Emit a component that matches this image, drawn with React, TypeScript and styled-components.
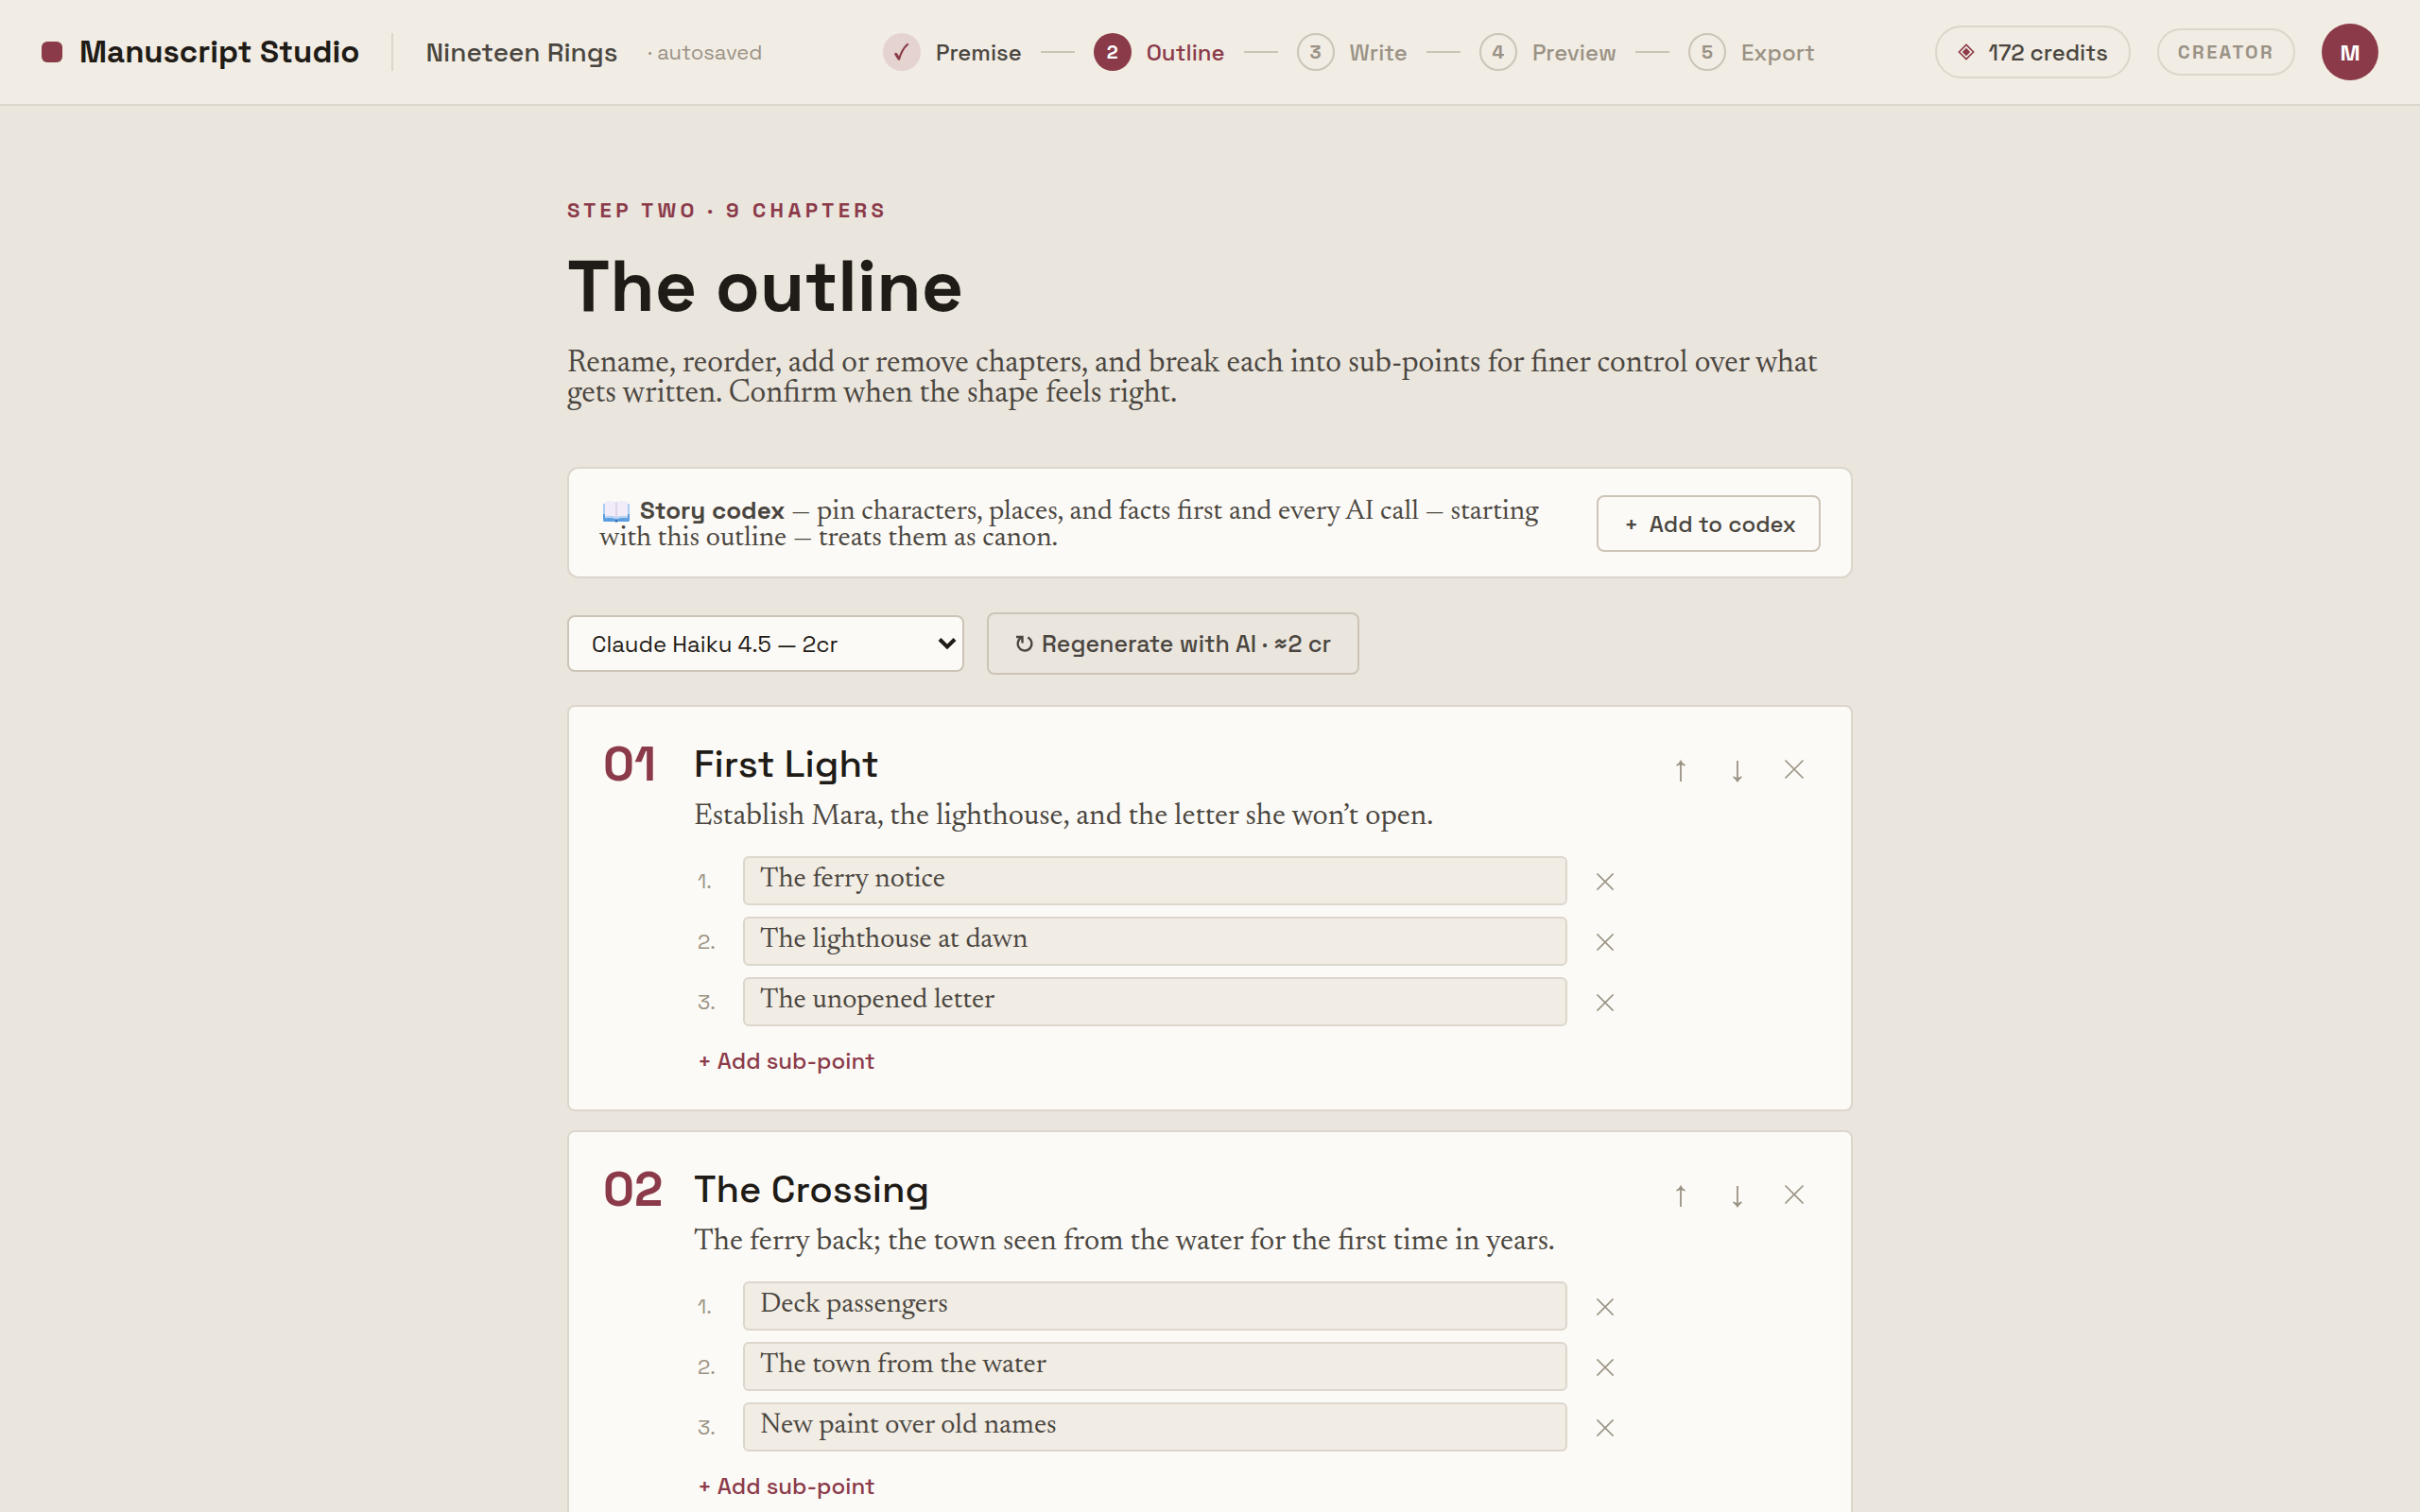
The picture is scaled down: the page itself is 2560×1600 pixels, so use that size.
import React, { Fragment, useState } from "react";
import styled, { createGlobalStyle } from "styled-components";

const color = {
  page: "#eae5dd",
  bar: "#f1ece4",
  card: "#fcfaf6",
  field: "#f1ece4",
  line: "#dcd6cc",
  lineStrong: "#cdc4b8",
  ink: "#1f1b16",
  text: "#4a463f",
  muted: "#9a9284",
  accent: "#8b3a4a",
  accentSoft: "#e5d3d0",
};

const sans = `"Space Grotesk", Inter, "Liberation Sans", sans-serif`;
const serif = `Newsreader, "Liberation Serif", serif`;

const GlobalStyle = createGlobalStyle`
  *, *::before, *::after { box-sizing: border-box; }
  body {
    margin: 0;
    background: ${color.page};
    color: ${color.ink};
    font-family: ${sans};
  }
  html { overflow: hidden auto; scrollbar-width: none; }
  button, input, select { font: inherit; color: inherit; margin: 0; }
  button { cursor: pointer; }
  h1, h2, p, ol { margin: 0; padding: 0; }
  svg { display: block; flex: none; }
`;

const Header = styled.header`
  display: flex;
  align-items: center;
  justify-content: space-between;
  height: 112px;
  padding: 0 44px;
  background: ${color.bar};
  border-bottom: 2px solid ${color.line};
`;

const Brand = styled.div`
  display: flex;
  align-items: center;
`;

const BrandMark = styled.span`
  width: 22px;
  height: 22px;
  margin-right: 18px;
  border-radius: 6px;
  background: ${color.accent};
`;

const BrandName = styled.span`
  font-size: 33px;
  font-weight: 700;
`;

const Divider = styled.span`
  width: 2px;
  height: 40px;
  margin: 0 34px;
  background: ${color.line};
`;

const ProjectName = styled.span`
  font-size: 28px;
  font-weight: 500;
  color: ${color.text};
`;

const SaveState = styled.span`
  margin-left: 32px;
  font-size: 22px;
  color: ${color.muted};
`;

const Steps = styled.nav`
  display: flex;
  align-items: center;
  gap: 20px;
`;

type StepState = "done" | "current" | "todo";

const Step = styled.a<{ $state: StepState }>`
  display: flex;
  align-items: center;
  gap: 16px;
  font-size: 24px;
  font-weight: 500;
  text-decoration: none;
  color: ${(p) =>
    p.$state === "done" ? color.text : p.$state === "current" ? color.accent : color.muted};
`;

const StepBadge = styled.span<{ $state: StepState }>`
  display: grid;
  place-items: center;
  width: 40px;
  height: 40px;
  border-radius: 50%;
  font-size: 20px;
  font-weight: 700;
  color: ${(p) => (p.$state === "current" ? "#fff" : "inherit")};
  background: ${(p) =>
    p.$state === "done" ? color.accentSoft : p.$state === "current" ? color.accent : "transparent"};
  border: ${(p) => (p.$state === "todo" ? `2px solid ${color.lineStrong}` : "0")};
`;

const StepLine = styled.span`
  width: 36px;
  height: 2px;
  background: ${color.lineStrong};
`;

const Account = styled.div`
  display: flex;
  align-items: center;
  gap: 28px;
`;

const Credits = styled.button`
  display: flex;
  align-items: center;
  gap: 14px;
  height: 56px;
  padding: 0 22px;
  border: 2px solid ${color.line};
  border-radius: 28px;
  background: transparent;
  font-size: 24px;
  font-weight: 500;
  color: ${color.text};
`;

const Plan = styled.span`
  display: flex;
  align-items: center;
  height: 50px;
  padding: 0 20px;
  border: 2px solid ${color.line};
  border-radius: 25px;
  font-size: 20px;
  font-weight: 600;
  letter-spacing: 0.12em;
  color: ${color.muted};
`;

const Avatar = styled.button`
  width: 60px;
  height: 60px;
  padding: 0;
  border: 0;
  border-radius: 50%;
  background: ${color.accent};
  font-size: 24px;
  font-weight: 700;
  color: #fff;
`;

const Main = styled.main`
  max-width: 1360px;
  margin: 0 auto;
  padding: 96px 0;
`;

const Eyebrow = styled.p`
  font-size: 22px;
  line-height: 28px;
  font-weight: 600;
  letter-spacing: 0.2em;
  color: ${color.accent};
`;

const Title = styled.h1`
  margin-top: 22px;
  font-size: 77px;
  line-height: 88px;
  font-weight: 700;
`;

const Lead = styled.p`
  margin-top: 24px;
  font-family: ${serif};
  font-size: 33px;
  line-height: 32px;
  color: ${color.text};
`;

const Codex = styled.section`
  display: flex;
  align-items: center;
  justify-content: space-between;
  gap: 48px;
  margin-top: 60px;
  padding: 28px 32px 26px;
  border: 2px solid ${color.line};
  border-radius: 12px;
  background: ${color.card};
`;

const CodexText = styled.p`
  padding-top: 4px;
  font-family: ${serif};
  font-size: 30px;
  line-height: 28px;
  color: ${color.text};

  svg { display: inline-block; margin: 0 10px 0 3px; vertical-align: -4px; }
  strong { font-family: ${sans}; font-size: 26px; line-height: 24px; font-weight: 600; }
`;

const Button = styled.button<{ $tall?: boolean }>`
  display: flex;
  flex: none;
  align-items: center;
  gap: 8px;
  height: ${(p) => (p.$tall ? 66 : 60)}px;
  padding: 0 ${(p) => (p.$tall ? 28 : 24)}px;
  border: 2px solid ${color.lineStrong};
  border-radius: 8px;
  background: transparent;
  font-size: ${(p) => (p.$tall ? 25 : 24)}px;
  font-weight: 500;
  color: ${color.text};
`;

const Plus = styled.span`
  width: 22px;
  text-align: center;
`;

const Toolbar = styled.div`
  display: flex;
  align-items: center;
  gap: 24px;
  margin-top: 36px;
`;

const SelectBox = styled.label`
  display: grid;
  align-items: center;
  width: 420px;

  > * { grid-area: 1 / 1; }
  > svg { justify-self: end; margin-right: 8px; pointer-events: none; }
`;

const Select = styled.select`
  appearance: none;
  width: 100%;
  height: 60px;
  padding: 0 40px 0 24px;
  border: 2px solid ${color.lineStrong};
  border-radius: 8px;
  background: ${color.card};
  font-size: 24px;
  color: ${color.ink};
`;

const Chapters = styled.div`
  display: flex;
  flex-direction: column;
  gap: 20px;
  margin-top: 32px;
`;

const Card = styled.article`
  display: grid;
  grid-template-columns: 72px 1fr auto;
  column-gap: 24px;
  padding: 34px 34px 28px 36px;
  border: 2px solid ${color.line};
  border-radius: 8px;
  background: ${color.card};
`;

const ChapterNumber = styled.div`
  font-size: 51px;
  line-height: 54px;
  font-weight: 600;
  color: ${color.accent};
`;

const ChapterBody = styled.div`
  display: flex;
  flex-direction: column;
  min-width: 0;
`;

const TitleInput = styled.input`
  width: 100%;
  height: 52px;
  padding: 0;
  border: 0;
  background: transparent;
  font-size: 40px;
  font-weight: 500;
  color: ${color.ink};
`;

const SummaryInput = styled.input`
  width: 100%;
  height: 48px;
  margin-top: 6px;
  padding: 0;
  border: 0;
  background: transparent;
  font-family: ${serif};
  font-size: 32px;
  color: ${color.text};
`;

const SubPoints = styled.ol`
  display: flex;
  flex-direction: column;
  gap: 12px;
  margin-top: 18px;
  list-style: none;
`;

const SubPoint = styled.li`
  display: flex;
  align-items: center;
`;

const SubNumber = styled.label`
  width: 52px;
  padding-left: 4px;
  font-size: 22px;
  color: ${color.muted};
`;

const SubInput = styled.input`
  flex: 1;
  min-width: 0;
  height: 52px;
  padding: 0 16px 2px;
  border: 2px solid ${color.line};
  border-radius: 6px;
  background: ${color.field};
  font-family: ${serif};
  font-size: 30px;
  color: ${color.text};
`;

const IconButton = styled.button`
  display: grid;
  place-items: center;
  width: 52px;
  height: 52px;
  padding: 0;
  border: 0;
  background: transparent;
  color: ${color.muted};
`;

const RemoveSub = styled(IconButton)`
  width: 60px;
  margin-left: 10px;
  padding-top: 2px;
`;

const AddSub = styled.button`
  align-self: flex-start;
  height: 48px;
  margin-top: 12px;
  padding: 0 4px;
  border: 0;
  background: transparent;
  font-size: 24px;
  font-weight: 500;
  color: ${color.accent};
`;

const Actions = styled.div`
  display: flex;
  align-items: flex-start;
  gap: 8px;
  padding-top: 6px;
`;

const Cross = ({ size }: { size: number }) => (
  <svg width={size} height={size} viewBox="0 0 20 20" fill="none" stroke="currentColor" strokeWidth="1.7" strokeLinecap="round">
    <path d="M1 1l18 18M19 1L1 19" />
  </svg>
);

const Arrow = ({ down }: { down?: boolean }) => (
  <svg width="12" height="28" viewBox="0 -4 12 28" fill="none" stroke="currentColor" strokeWidth="1.8">
    {down ? (
      <>
        <path d="M6 1v20" />
        <path d="M2.500 19.500h7l-3.500 4z" fill="currentColor" stroke="none" />
        <path d="M1.500 18.200c2 .5 3.500 2 4.500 4c1-2 2.500-3.500 4.500-4" />
      </>
    ) : (
      <>
        <path d="M6 3v20" />
        <path d="M1.500 5.800c2-.5 3.500-2 4.500-4c1 2 2.500 3.500 4.500 4" />
        <path d="M2.500 5.500h7l-3.500-4z" fill="currentColor" stroke="none" />
      </>
    )}
  </svg>
);

const Check = () => (
  <svg width="16" height="20" viewBox="0 0 16 20" fill="none" stroke={color.accent} strokeWidth="2.200" strokeLinecap="round" strokeLinejoin="round">
    <path d="M1.500 12l3.500 5.500C7 11 10 5.500 14 2" />
    <path d="M2 12.500l2.800 4.500" strokeWidth="3" />
  </svg>
);

const Diamond = () => (
  <svg width="18" height="18" viewBox="0 0 18 18">
    <path d="M9 1.400L16.600 9L9 16.600L1.400 9z" fill="none" stroke={color.accent} strokeWidth="1.600" />
    <path d="M9 4.800L13.200 9L9 13.200L4.800 9z" fill={color.accent} />
  </svg>
);

const Refresh = () => (
  <svg width="20" height="20" viewBox="0 0 20 20" fill="none" stroke="currentColor" strokeWidth="2.400">
    <path d="M1 3h6.500v6.500" />
    <path d="M6.800 3.500A7.400 7.400 0 1 0 16.500 6.500L13.500 3.200" />
  </svg>
);

const Chevron = () => (
  <svg width="20" height="14" viewBox="0 0 20 14" fill="none" stroke={color.ink} strokeWidth="4">
    <path d="M2 2.500l8 8l8-8" />
  </svg>
);

const Book = () => (
  <svg width="30" height="24" viewBox="0 0 30 24" aria-hidden="true">
    <path d="M1 4h28v17.500q0 1.500-1.500 1.500H17q-2 1.500-4 0H2.500Q1 23 1 21.500z" fill="#5b9fe0" />
    <path d="M1 4h28v11H1z" fill="#a9cdf0" />
    <path d="M3 1.500q7-1.500 12 .8q5-2.300 12-.8V19q-7-1-12 1q-5-2-12-1z" fill="#f1ecf8" />
    <path d="M3 17q7-1 12 1q5-2 12-1v2.300q-7-1-12 1q-5-2-12-1z" fill="#b9d4f3" />
    <path d="M15 2.300V20" stroke="#cfc6e0" strokeWidth="1.200" />
    <path d="M13.500 21.500h3l-1.500 2z" fill="#24558f" />
  </svg>
);

const steps: { label: string; state: StepState }[] = [
  { label: "Premise", state: "done" },
  { label: "Outline", state: "current" },
  { label: "Write", state: "todo" },
  { label: "Preview", state: "todo" },
  { label: "Export", state: "todo" },
];

type Chapter = { title: string; summary: string; points: string[] };

const initialChapters: Chapter[] = [
  {
    title: "First Light",
    summary: "Establish Mara, the lighthouse, and the letter she won’t open.",
    points: ["The ferry notice", "The lighthouse at dawn", "The unopened letter"],
  },
  {
    title: "The Crossing",
    summary: "The ferry back; the town seen from the water for the first time in years.",
    points: ["Deck passengers", "The town from the water", "New paint over old names"],
  },
];

function ChapterCard({ chapter, index }: { chapter: Chapter; index: number }) {
  const number = String(index + 1).padStart(2, "0");
  return (
    <Card>
      <ChapterNumber>{number}</ChapterNumber>
      <ChapterBody>
        <TitleInput aria-label={`Chapter ${number} title`} defaultValue={chapter.title} />
        <SummaryInput aria-label={`Chapter ${number} summary`} defaultValue={chapter.summary} />
        <SubPoints>
          {chapter.points.map((point, i) => (
            <SubPoint key={point}>
              <SubNumber htmlFor={`point-${index}-${i}`}>{i + 1}.</SubNumber>
              <SubInput id={`point-${index}-${i}`} defaultValue={point} />
              <RemoveSub type="button" aria-label="Remove sub-point">
                <Cross size={18} />
              </RemoveSub>
            </SubPoint>
          ))}
        </SubPoints>
        <AddSub type="button">+ Add sub-point</AddSub>
      </ChapterBody>
      <Actions>
        <IconButton type="button" aria-label="Move up"><Arrow /></IconButton>
        <IconButton type="button" aria-label="Move down"><Arrow down /></IconButton>
        <IconButton type="button" aria-label="Remove chapter"><Cross size={20} /></IconButton>
      </Actions>
    </Card>
  );
}

export default function App() {
  const [model, setModel] = useState("haiku");
  return (
    <>
      <GlobalStyle />
      <Header>
        <Brand>
          <BrandMark />
          <BrandName>Manuscript Studio</BrandName>
          <Divider />
          <ProjectName>Nineteen Rings</ProjectName>
          <SaveState>· autosaved</SaveState>
        </Brand>
        <Steps aria-label="Progress">
          {steps.map((step, i) => (
            <Fragment key={step.label}>
              {i > 0 && <StepLine />}
              <Step href={`#${step.label.toLowerCase()}`} $state={step.state}>
                <StepBadge $state={step.state}>{step.state === "done" ? <Check /> : i + 1}</StepBadge>
                {step.label}
              </Step>
            </Fragment>
          ))}
        </Steps>
        <Account>
          <Credits type="button"><Diamond />172 credits</Credits>
          <Plan>CREATOR</Plan>
          <Avatar type="button">M</Avatar>
        </Account>
      </Header>
      <Main>
        <Eyebrow>STEP TWO · 9 CHAPTERS</Eyebrow>
        <Title>The outline</Title>
        <Lead>
          Rename, reorder, add or remove chapters, and break each into sub-points for finer control
          over what gets written. Confirm when the shape feels right.
        </Lead>
        <Codex>
          <CodexText>
            <Book />
            <strong>Story codex</strong> — pin characters, places, and facts first and every AI call
            — starting with this outline — treats them as canon.
          </CodexText>
          <Button type="button"><Plus>+</Plus>Add to codex</Button>
        </Codex>
        <Toolbar>
          <SelectBox>
            <Select aria-label="Model" value={model} onChange={(e) => setModel(e.target.value)}>
              <option value="haiku">Claude Haiku 4.5 — 2cr</option>
            </Select>
            <Chevron />
          </SelectBox>
          <Button type="button" $tall><Refresh />Regenerate with AI · ≈2 cr</Button>
        </Toolbar>
        <Chapters>
          {initialChapters.map((chapter, i) => (
            <ChapterCard key={chapter.title} chapter={chapter} index={i} />
          ))}
        </Chapters>
      </Main>
    </>
  );
}
